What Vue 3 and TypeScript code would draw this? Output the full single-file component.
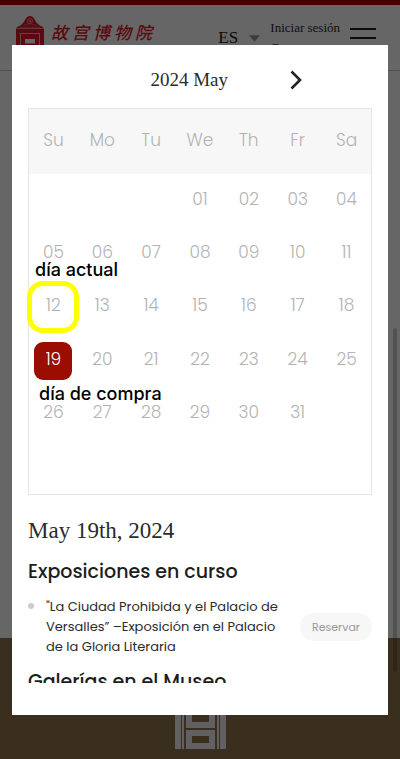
<script setup lang="ts">
import { ref } from 'vue'

const weekdays = ['Su', 'Mo', 'Tu', 'We', 'Th', 'Fr', 'Sa']
const firstWeekday = 3
const daysInMonth = 31
const today = 12
const selected = ref(19)
const language = ref('ES')

const weeks: (number | null)[][] = Array.from({ length: 6 }, (_, w) =>
  Array.from({ length: 7 }, (_, d) => {
    const day = w * 7 + d - firstWeekday + 1
    return day >= 1 && day <= daysInMonth ? day : null
  }),
)

const pad = (day: number) => String(day).padStart(2, '0')
const brand = ['故', '宫', '博', '物', '院']
</script>

<template>
  <div class="page">
    <header class="site-header">
      <a class="brand" href="#">
        <svg class="brand-mark" viewBox="0 0 30 36" aria-hidden="true">
          <path d="M1 12.500c1-2.500 5-2.500 7-5.500 2-2 3-7 7-7s5 5 7 7c2 3 6 3 7 5.500z" fill="currentColor" />
          <circle cx="15" cy="5" r="2.500" fill="none" stroke="#fff" stroke-width=".8" opacity=".6" />
          <circle cx="15" cy="5" r=".8" fill="#fff" />
          <path d="M9 9.500c2-2 10-2 12 0M5 11.300h20" fill="none" stroke="#fff" stroke-width=".7" opacity=".4" />
          <path d="M1 13h28v23H1z" fill="currentColor" />
          <path d="M5.500 36V17.500h19V36" fill="none" stroke="#fff" stroke-width="1" opacity=".65" />
          <path d="M10 23h10v4.500H10z" fill="#fff" />
          <path d="M7 32h16" stroke="#fff" stroke-width="1" />
        </svg>
        <span class="brand-name"><span v-for="c in brand" :key="c">{{ c }}</span></span>
      </a>
      <div class="tools">
        <label class="language">
          <select v-model="language" aria-label="Idioma">
            <option>ES</option>
          </select>
          <svg viewBox="0 0 12 7" aria-hidden="true"><path d="M0 0h12L6 7z" fill="#999" /></svg>
        </label>
        <nav class="account">
          <a href="#">Iniciar sesión</a>
          <a href="#">Crear</a>
        </nav>
        <button class="menu" type="button" aria-label="Menú"><i></i><i></i></button>
      </div>
    </header>

    <main class="content"></main>

    <footer class="site-footer">
      <svg viewBox="0 0 52 61" aria-hidden="true">
        <g fill="currentColor">
          <path d="M1 0h6v61H1zM8 0h2v61H8zM43 0h2v61h-2zM46 0h6v61h-6z" />
          <path fill-rule="evenodd" d="M12 16h29v24H12zM18 22v12h17V22zM12 42h29v19H12zM18 48v7h17v-7z" />
        </g>
      </svg>
    </footer>

    <div class="scroll-thumb"></div>

    <div class="backdrop">
      <section class="dialog" role="dialog" aria-modal="true">
        <div class="month">
          <h1>2024 May</h1>
          <button type="button" aria-label="Mes siguiente">
            <svg viewBox="0 0 12 20" aria-hidden="true">
              <path d="M1.500 1.500 10 10l-8.500 8.500" fill="none" stroke="#222" stroke-width="2.600" />
            </svg>
          </button>
        </div>

        <table class="calendar">
          <thead>
            <tr>
              <th v-for="name in weekdays" :key="name" scope="col">{{ name }}</th>
            </tr>
          </thead>
          <tbody>
            <tr v-for="(week, w) in weeks" :key="w">
              <td v-for="(day, d) in week" :key="d">
                <div v-if="day" class="cell">
                  <span v-if="day === today" class="note above">día actual</span>
                  <button
                    type="button"
                    :class="{ today: day === today, selected: day === selected }"
                    @click="selected = day"
                  >{{ pad(day) }}</button>
                  <span v-if="day === selected" class="note below">día de compra</span>
                </div>
              </td>
            </tr>
          </tbody>
        </table>

        <div class="details">
          <h2>May {{ selected }}th, 2024</h2>
          <h3>Exposiciones en curso</h3>
          <ul>
            <li>
              <p>"La Ciudad Prohibida y el Palacio de Versalles” –Exposición en el Palacio de la Gloria Literaria</p>
              <button type="button" class="reserve">Reservar</button>
            </li>
          </ul>
          <h3>Galerías en el Museo</h3>
        </div>
      </section>
    </div>
  </div>
</template>

<style>
body {
  margin: 0;
  background: #fff;
}
</style>

<style scoped>
.page {
  position: relative;
  display: flex;
  flex-direction: column;
  min-height: 100vh;
  overflow: hidden;
  font-family: Poppins, Inter, "Liberation Sans", sans-serif;
  color: #2b2b2b;
}

button {
  border: 0;
  padding: 0;
  background: none;
  font: inherit;
  color: inherit;
  cursor: pointer;
}

a {
  color: inherit;
  text-decoration: none;
}

.site-header {
  box-sizing: border-box;
  display: flex;
  justify-content: space-between;
  height: 71px;
  padding: 11px 24px 0 15px;
  border-top: 5px solid #a80000;
  border-bottom: 1px solid #ccc;
  font-family: "Liberation Serif", serif;
}

.brand {
  display: flex;
  gap: 6px;
  color: #e6142a;
}

.brand-mark {
  width: 30px;
  height: 36px;
}

.brand-name {
  display: flex;
  gap: 4px;
  padding-top: 4px;
  font: italic 500 17px/24px "Noto Sans CJK SC", sans-serif;
}

.tools {
  display: flex;
  align-items: flex-start;
}

.language {
  display: flex;
  align-items: center;
  gap: 11px;
  margin: 12px 10px 0 0;
}

.language select {
  appearance: none;
  width: 20px;
  border: 0;
  padding: 0;
  background: none;
  font: 17px/20px "Liberation Serif", serif;
  color: #222;
}

.language svg {
  width: 11px;
  height: 7px;
}

.account {
  display: flex;
  flex-direction: column;
  margin-right: 10px;
  padding-top: 2px;
  font-size: 13px;
  line-height: 20px;
}

.menu {
  display: flex;
  flex-direction: column;
  gap: 7px;
  padding-top: 12px;
}

.menu i {
  width: 26px;
  height: 2px;
  background: #222;
}

.content {
  flex: 1;
}

.site-footer {
  display: flex;
  justify-content: center;
  height: 121px;
  background: #92744c;
}

.site-footer svg {
  width: 52px;
  height: 61px;
  margin-top: 50px;
  color: #f4f0f6;
}

.scroll-thumb {
  position: absolute;
  top: 328px;
  right: 3px;
  width: 4px;
  height: 344px;
  border-radius: 2px;
  background: rgba(0, 0, 0, 0.2);
}

.backdrop {
  position: fixed;
  inset: 0;
  display: flex;
  padding: 45px 12px 44px;
  background: rgba(0, 0, 0, 0.6);
}

.dialog {
  flex: 1;
  display: flex;
  flex-direction: column;
  min-width: 0;
  padding: 0 16px 32px;
  background: #fff;
}

.month {
  display: flex;
  align-items: center;
  justify-content: flex-end;
  gap: 62px;
  height: 63px;
  padding: 6px 70px 0 0;
  box-sizing: border-box;
}

.month h1 {
  margin: 0;
  font: 19px/24px "Liberation Serif", serif;
}

.month button {
  display: flex;
}

.month svg {
  width: 12px;
  height: 20px;
}

.calendar {
  width: 100%;
  height: 387px;
  flex: none;
  table-layout: fixed;
  border-collapse: separate;
  border-spacing: 0;
  border: 1px solid #e4e4e4;
  font-size: 17px;
  font-weight: 300;
  color: #b3b3b3;
}

.calendar th {
  height: 61px;
  padding: 0 0 4px;
  background: #f7f7f7;
  font-weight: 300;
}

.calendar tbody tr {
  height: 53px;
}

.calendar td {
  padding: 0;
}

.cell {
  position: relative;
  display: flex;
  align-items: center;
  justify-content: center;
  height: 38px;
}

.cell button {
  flex: none;
  width: 38px;
  height: 38px;
  border-radius: 9px;
  padding-bottom: 4px;
}

.cell .today {
  box-shadow: 0 0 0 2px #fff, 0 0 0 7px #ff0;
}

.cell .selected {
  background: #9b0d00;
  color: #fff;
}

.note {
  position: absolute;
  z-index: 1;
  font: 500 18px/22px Inter, sans-serif;
  color: #000;
  white-space: nowrap;
}

.note.above {
  bottom: 45px;
  left: 6px;
}

.note.below {
  top: 41px;
  left: 10px;
}

.details {
  flex: 1;
  min-height: 0;
  overflow: hidden auto;
  scrollbar-width: none;
}

.details h2 {
  margin: 21px 0 14px;
  font: 23px/30px "Liberation Serif", serif;
}

.details h3 {
  margin: 0;
  font-size: 19px;
  font-weight: 500;
  line-height: 24px;
  color: #1d1d1d;
}

.details ul {
  margin: 13px 0;
  padding: 0;
  list-style: none;
}

.details li {
  display: flex;
  align-items: center;
  gap: 12px;
}

.details li::before {
  content: "";
  align-self: flex-start;
  flex: none;
  width: 6px;
  height: 6px;
  margin-top: 6px;
  border-radius: 50%;
  background: #ccc;
}

.details p {
  flex: 1;
  margin: 0;
  font-size: 13px;
  line-height: 20px;
}

.reserve {
  flex: none;
  width: 72px;
  height: 28px;
  border-radius: 14px;
  background: #f7f7f7;
  font-size: 11px;
  color: #999;
}
</style>
